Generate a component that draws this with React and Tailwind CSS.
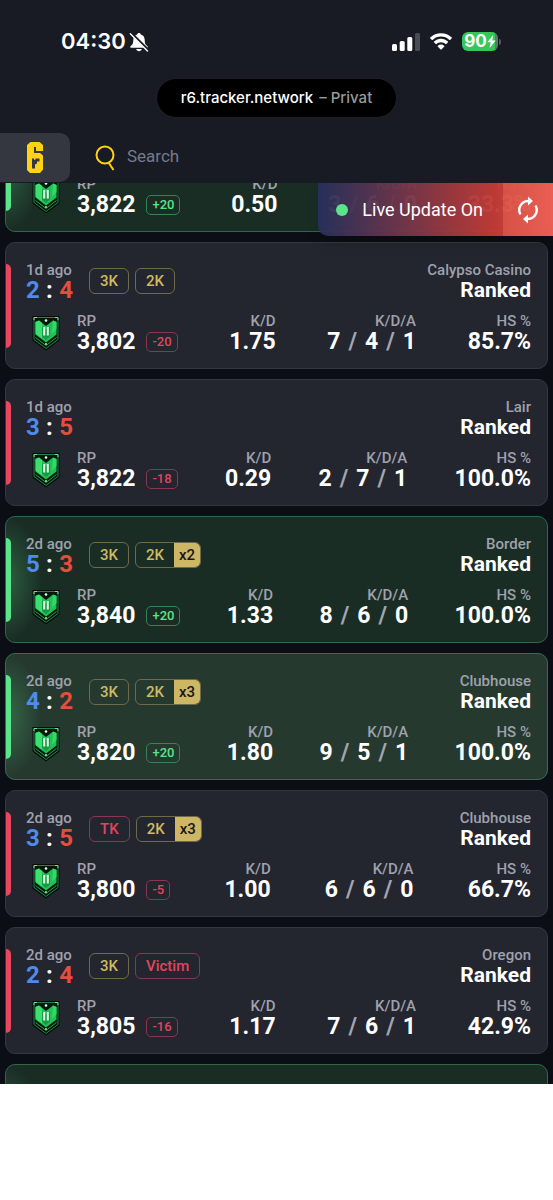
import React from "react";

const matches = [
  { ago: "2d ago", a: 4, b: 3, map: "Bank", tags: [], rp: "3,822", delta: "+20", kd: "0.50", kda: [3, 6, 0], hs: "33.3%", win: true },
  { ago: "1d ago", a: 2, b: 4, map: "Calypso Casino", tags: [["3K"], ["2K"]], rp: "3,802", delta: "-20", kd: "1.75", kda: [7, 4, 1], hs: "85.7%" },
  { ago: "1d ago", a: 3, b: 5, map: "Lair", tags: [], rp: "3,822", delta: "-18", kd: "0.29", kda: [2, 7, 1], hs: "100.0%" },
  { ago: "2d ago", a: 5, b: 3, map: "Border", tags: [["3K"], ["2K", "x2"]], rp: "3,840", delta: "+20", kd: "1.33", kda: [8, 6, 0], hs: "100.0%", win: true },
  { ago: "2d ago", a: 4, b: 2, map: "Clubhouse", tags: [["3K"], ["2K", "x3"]], rp: "3,820", delta: "+20", kd: "1.80", kda: [9, 5, 1], hs: "100.0%", win: true, active: true },
  { ago: "2d ago", a: 3, b: 5, map: "Clubhouse", tags: [["TK"], ["2K", "x3"]], rp: "3,800", delta: "-5", kd: "1.00", kda: [6, 6, 0], hs: "66.7%" },
  { ago: "2d ago", a: 2, b: 4, map: "Oregon", tags: [["3K"], ["Victim"]], rp: "3,805", delta: "-16", kd: "1.17", kda: [7, 6, 1], hs: "42.9%" },
  { ago: "2d ago", a: 4, b: 1, map: "Oregon", tags: [], rp: "3,821", delta: "+20", kd: "1.20", kda: [6, 5, 0], hs: "50.0%", win: true },
];

function RankBadge() {
  return (
    <svg viewBox="0 0 28 36" className="h-9 w-7" aria-hidden="true">
      <path d="M.5 1h27v24.500L14 35.500.5 25.500z" fill="#050c0a" />
      <path d="M2 2.500h24v22L14 33.500 2 24.500z" fill="#06170e" stroke="#1c8a44" strokeWidth="1" />
      <path d="M2 5V2.500h3M23 2.500h3V5" fill="none" stroke="#7fd896" strokeWidth="1" />
      <path d="m3.500 22.500 10.500 8 10.500-8" fill="none" stroke="#2a9c4f" strokeWidth="1" />
      <path d="M3.500 7 7 5.500 14 11l7-5.500L24.500 7v12.500L14 27.500 3.500 19.500z" fill="#1fc254" />
      <path d="M3.500 7 7 5.500l3 2.400v15.600l-6.500-5z" fill="#3ddf70" />
      <path d="M10 11.500 14 14.500l4-3v10L14 25l-4-3.500z" fill="#149a41" />
      <path d="M21 5.500 24.500 7v7L20 19z" fill="#35d768" />
      <circle cx="14" cy="5.500" r="1.300" fill="#e4ffe9" />
      <circle cx="14" cy="29" r="1" fill="#a5f0b4" />
      <path d="M11.200 12h2v8.500h-2zM14.800 12h2v8.500h-2z" fill="#e6f9ea" />
    </svg>
  );
}

function Tag({ label, count }) {
  const red = label === "TK" || label === "Victim";
  return (
    <span className={"flex h-[26px] items-stretch overflow-hidden rounded-md border text-[15px] font-medium leading-6 " + (red ? "border-[#8a3750] text-[#e0455f]" : "border-[#6f6a4b] text-[#cdbb62]")}>
      <span className="px-2.5">{label}</span>
      {count && <span className="bg-[#cdb765] px-[5px] text-[#15161b]">{count}</span>}
    </span>
  );
}

function Stat({ label, children }) {
  return (
    <div className="flex flex-col items-end">
      <dt className="text-[15px] font-medium leading-[18px] text-[#9fa1ad]">{label}</dt>
      <dd className="flex gap-2 text-[23px] font-bold leading-6 text-white">{children}</dd>
    </div>
  );
}

function MatchCard({ m }) {
  const tone = m.active
    ? "border-[#3a6b50] bg-[#25392f]"
    : m.win
      ? "border-[#2f6749] bg-[#1a2d25]"
      : "border-[#343641] bg-[#23252f]";
  return (
    <article className={"relative flex h-[127px] shrink-0 flex-col gap-[11px] overflow-hidden rounded-[10px] border pt-[18px] pr-4 pl-5 " + tone}>
      {m.win && <div className="absolute inset-y-0 left-0 w-9 bg-[radial-gradient(ellipse_at_left,#5be58a48_0%,transparent_70%)]" />}
      <div className={"absolute top-[21px] left-0 h-[84px] w-[5px] rounded-r-md " + (m.win ? "bg-[#5be58a]" : "bg-[#e8475f]")} />
      <div className="relative flex items-center">
        <div className="w-[47px] whitespace-nowrap">
          <div className="text-[15px] font-medium leading-[18px] text-[#9fa1ad]">{m.ago}</div>
          <div className="flex justify-between text-2xl font-bold leading-[22px]">
            <span className="text-[#4f8be8]">{m.a}</span>
            <span className="text-white">:</span>
            <span className="text-[#e44f3d]">{m.b}</span>
          </div>
        </div>
        <div className="ml-4 flex gap-1.5">
          {m.tags.map(([label, count]) => <Tag key={label} label={label} count={count} />)}
        </div>
        <div className="ml-auto text-right">
          <div className="text-[15px] font-medium leading-[18px] text-[#9fa1ad]">{m.map}</div>
          <div className="text-[21px] font-bold leading-[22px] text-white">Ranked</div>
        </div>
      </div>
      <div className="relative flex items-center">
        <div className="mr-[17px] ml-1.5 shrink-0"><RankBadge /></div>
        <dl className="flex grow justify-between">
          <div>
            <dt className="text-[15px] font-medium leading-[18px] text-[#9fa1ad]">RP</dt>
            <dd className="flex items-center gap-[11px] text-[23px] font-bold leading-6 text-white">
              {m.rp}
              <span className={"rounded-[5px] border px-[5px] text-[13px] font-medium leading-[18px] " + (m.win ? "border-[#368259] text-[#5be58a]" : "border-[#8a3750] text-[#e0455f]")}>{m.delta}</span>
            </dd>
          </div>
          <Stat label="K/D">{m.kd}</Stat>
          <Stat label="K/D/A">
            <span>{m.kda[0]}</span>
            <span className="text-[#a3a5b1]">/</span>
            <span>{m.kda[1]}</span>
            <span className="text-[#a3a5b1]">/</span>
            <span>{m.kda[2]}</span>
          </Stat>
          <Stat label="HS %">{m.hs}</Stat>
        </dl>
      </div>
    </article>
  );
}

function StatusBar() {
  return (
    <div className="flex h-[79px] items-center justify-between pt-1 pr-[52px] pl-[61px] font-['Inter',sans-serif]">
      <div className="flex items-center gap-[3px]">
        <span className="text-[22px] font-semibold text-white">04:30</span>
        <svg viewBox="0 0 20 20" className="size-5" aria-label="Silent">
          <path d="M10 1c-1 0-1.700.7-1.800 1.500C5.500 3.300 4.300 5.500 4.300 8c0 4-1.300 5-2.800 6.300-.6.600-.3 1.400.5 1.400h16c.8 0 1.100-.8.500-1.400C17 13 15.700 12 15.700 8c0-2.500-1.200-4.700-3.900-5.500C11.700 1.700 11 1 10 1zM7.200 17h5.600c-.3 1.300-1.400 2.200-2.800 2.200S7.500 18.300 7.200 17z" fill="#fff" />
          <path d="m2 .9 17.200 17.200" stroke="#181b23" strokeWidth="2.600" />
          <path d="m1.300 1.700 17.200 17.200" stroke="#fff" strokeWidth="1.400" strokeLinecap="round" />
        </svg>
      </div>
      <div className="flex items-center">
        <svg viewBox="0 0 28 18" className="h-[18px] w-7" aria-label="Signal">
          <rect x="0" y="11" width="5" height="7" rx="1.500" fill="#fff" />
          <rect x="7.700" y="8" width="5" height="10" rx="1.500" fill="#fff" />
          <rect x="15.300" y="4" width="5" height="14" rx="1.500" fill="#fff" />
          <rect x="23" y="0" width="5" height="18" rx="1.500" fill="#4a4c53" />
        </svg>
        <svg viewBox="0 0 24 18" className="ml-[9px] h-[18px] w-6" aria-label="Wi-Fi" fill="#fff">
          <path d="M12 3.600c3.200 0 6.200 1.200 8.400 3.300.2.200.5.200.7 0l1.700-1.700c.2-.2.200-.5 0-.7C19.900 1.700 16.100.2 12 .2S4.100 1.700 1.200 4.500c-.2.200-.2.500 0 .7l1.700 1.700c.2.200.5.200.7 0C5.800 4.800 8.800 3.600 12 3.600z" />
          <path d="M12 9.200c1.800 0 3.400.7 4.600 1.800.2.200.5.200.7 0L19 9.300c.2-.2.200-.5 0-.7-1.900-1.700-4.300-2.800-7-2.800s-5.100 1.100-7 2.800c-.2.200-.2.500 0 .7L6.700 11c.2.200.5.200.7 0C8.600 9.900 10.200 9.200 12 9.200z" />
          <path d="M15.300 12.900c.2.200.2.500 0 .7l-2.900 3c-.2.200-.6.200-.8 0l-2.900-3c-.2-.2-.2-.5 0-.7 2-1.700 4.600-1.700 6.600 0z" />
        </svg>
        <div className="ml-[9px] flex h-[19px] w-9 items-center justify-center rounded-md bg-[linear-gradient(to_right,#34c759_92%,#5a7c66_92%)] text-[17px] font-bold leading-none text-white">
          90
          <svg viewBox="0 0 9 13" className="h-[13px] w-[9px]" aria-hidden="true"><path d="M6.200 0 .3 7.200h3.400L2.600 13l6.100-7.500H5.300z" fill="#fff" /></svg>
        </div>
        <span className="ml-px h-1.5 w-0.5 rounded-r-full bg-[#55575e]" />
      </div>
    </div>
  );
}

export default function App() {
  return (
    <div className="flex h-screen flex-col bg-white font-['Roboto',sans-serif]">
      <header className="flex h-[183px] shrink-0 flex-col bg-[#181b23]">
        <StatusBar />
        <div className="flex h-[38px] shrink-0 items-center gap-1.5 self-center rounded-full bg-black px-6 font-['Inter',sans-serif] text-[15px] font-medium text-white ring-1 ring-[#1e1f26]">
          r6.tracker.network <span className="text-[#98999d]">– Privat</span>
        </div>
        <div className="mt-4 flex h-[49px] items-center">
          <a href="#home" aria-label="R6 Tracker" className="flex h-full w-[70px] items-center justify-center rounded-r-[10px] bg-[#343640]">
            <svg viewBox="0 0 16 31" className="h-[31px] w-4" aria-hidden="true">
              <path fillRule="evenodd" d="M3.500 0h9L16 3v6H9V5H7v6h6l3 2.500v14L13 31H3L0 28V3zM5 16.500V26.500h3v-4l2-1v-2h2.500v-3H8.500v1.200H7v-1.200z" fill="#ffd315" />
            </svg>
          </a>
          <label className="ml-[25px] flex grow items-center gap-2.5">
            <svg viewBox="0 0 22 26" className="h-[26px] w-[22px]" fill="none" stroke="#ffd315" strokeWidth="2" aria-hidden="true">
              <circle cx="10" cy="10" r="8.500" />
              <path d="m13.500 17.500 5 7.500" />
            </svg>
            <input type="search" aria-label="Search" placeholder="Search" className="h-[22px] min-w-0 grow self-start bg-transparent text-[17px] leading-[22px] text-white outline-none placeholder:text-[#777a8d]" />
          </label>
        </div>
      </header>
      <main className="relative min-h-0 grow overflow-hidden bg-[#0b0e14]">
        <div className="-mt-[78px] flex flex-col gap-2.5 px-[5px]">
          {matches.map((m, i) => <MatchCard key={i} m={m} />)}
        </div>
        <div className="absolute top-0 right-0 flex h-[53px] items-center overflow-hidden rounded-bl-[10px] bg-[linear-gradient(to_right,#26305cf5,#c23a36f5_75%,#e8524bf5)] text-lg text-white shadow-lg">
          <span className="mr-3.5 ml-[18px] size-3 rounded-full bg-[#5be58a]" />
          <span>Live Update On</span>
          <button aria-label="Refresh" className="ml-5 flex h-full w-[50px] items-center justify-center bg-[#ff7a6655]">
            <svg viewBox="0 0 24 28" className="h-7 w-6" fill="none" stroke="#fff" strokeWidth="2.400" aria-hidden="true">
              <path d="M4.500 18.500A9 9 0 0 1 12 5h2M19.500 9.500A9 9 0 0 1 12 23h-2" />
              <path d="M12 .5 17 5l-5 4.500zM12 18.500 7 23l5 4.500z" fill="#fff" stroke="none" />
            </svg>
          </button>
        </div>
      </main>
      <footer className="h-[116px] shrink-0 bg-white" />
    </div>
  );
}
